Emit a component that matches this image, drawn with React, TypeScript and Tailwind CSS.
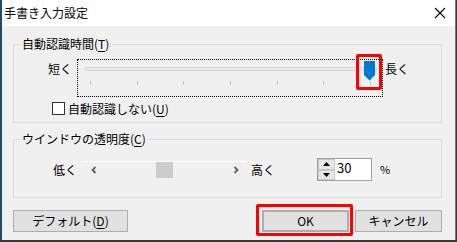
import React from 'react'

const font = { fontFamily: '"Noto Sans CJK JP", "Noto Sans", sans-serif' }

function Ul({ children }: { children: React.ReactNode }) {
  return <span className="underline underline-offset-2">{children}</span>
}

function Slider() {
  const ticks = [0, 1, 2, 3, 4, 5, 6]
  return (
    <div className="relative w-[306px] h-[38px] border border-dotted border-black">
      {/* track */}
      <div className="absolute left-[7px] top-[7px] w-[292px] h-[4px] bg-[#e7eaea] border border-[#d6d6d6]" />
      {/* ticks */}
      {ticks.map((i) => (
        <div
          key={i}
          className="absolute top-[21px] w-[1px] h-[4px] bg-[#c4c4c4]"
          style={{ left: 12 + i * 46.67 }}
        />
      ))}
      {/* thumb */}
      <svg className="absolute left-[286px] top-[1px]" width="11" height="20" viewBox="0 0 11 20">
        <polygon points="0,0 11,0 11,14 5.5,19.5 0,14" fill="#0078d7" />
      </svg>
      {/* annotation */}
      <div className="absolute left-[278px] top-[-6px] w-[26px] h-[36px] border-[3px] border-[#ff0000] rounded-[2px]" />
    </div>
  )
}

function ScrollBar() {
  return (
    <div className="relative w-[162px] h-[17px] border-t border-white flex items-center justify-between px-[6px]">
      <svg width="8" height="8" viewBox="0 0 8 8">
        <polyline points="5.5,1 2.5,4 5.5,7" fill="none" stroke="#606060" strokeWidth="1.8" />
      </svg>
      <div className="absolute left-[72px] top-0 w-[17px] h-[16px] bg-[#cdcdcd]" />
      <svg width="8" height="8" viewBox="0 0 8 8">
        <polyline points="2.5,1 5.5,4 2.5,7" fill="none" stroke="#606060" strokeWidth="1.8" />
      </svg>
    </div>
  )
}

function Spinner() {
  return (
    <div className="flex w-[55px] h-[23px] border border-[#a0a0a0] bg-white">
      <div className="flex flex-col w-[17px] h-full bg-[#f0f0f0]">
        <div className="flex-1 flex items-center justify-center border border-[#c8c8c8] bg-[#e6e6e6]">
          <svg width="7" height="4" viewBox="0 0 7 4"><polygon points="0,4 7,4 3.5,0" fill="#000" /></svg>
        </div>
        <div className="flex-1 flex items-center justify-center border border-[#c8c8c8] bg-[#e6e6e6]">
          <svg width="7" height="4" viewBox="0 0 7 4"><polygon points="0,0 7,0 3.5,4" fill="#000" /></svg>
        </div>
      </div>
      <div className="pl-[2px] text-[13px] leading-[18px]">30</div>
    </div>
  )
}

function Button({ children, className = '' }: { children: React.ReactNode; className?: string }) {
  return (
    <div
      className={`h-[22px] bg-[#e1e1e1] border border-[#adadad] flex items-center justify-center text-[12px] leading-none ${className}`}
    >
      {children}
    </div>
  )
}

export default function App() {
  return (
    <div className="w-[457px] h-[242px] overflow-hidden bg-[#3a3a3a] text-black" style={font}>
      <div className="w-[456px] h-[240px] flex flex-col border-l-[2px] border-[#1d4b72] border-r border-r-[#7a7a7a] bg-[#f0f0f0]">
        {/* title bar */}
        <div className="h-[26px] bg-white flex items-center justify-between pl-[2px] pr-[9px] shrink-0">
          <span className="text-[12px] leading-none">手書き入力設定</span>
          <svg width="12" height="12" viewBox="0 0 12 12">
            <path d="M1 1 L11 11 M11 1 L1 11" stroke="#000" strokeWidth="1.1" />
          </svg>
        </div>

        <div className="flex-1 flex flex-col pl-[11px] pr-[13px] pt-[10px]">
          {/* group 1 */}
          <fieldset className="h-[87px] border border-[#dcdcdc] px-0">
            <legend className="ml-[7px] px-[1px] text-[12px] leading-[16px]">
              自動認識時間(<Ul>T</Ul>)
            </legend>
            <div className="flex items-start pt-[7px] pl-[34px]">
              <span className="text-[12px] leading-none mt-[4px] mr-[5px]">短く</span>
              <Slider />
              <span className="text-[12px] leading-none mt-[4px] ml-[2px]">長く</span>
            </div>
            <div className="flex items-center pl-[38px] mt-[5px]">
              <div className="w-[13px] h-[13px] border border-[#333] bg-white mr-[3px]" />
              <span className="text-[12px] leading-none">
                自動認識しない(<Ul>U</Ul>)
              </span>
            </div>
          </fieldset>

          {/* group 2 */}
          <fieldset className="mt-[8px] h-[67px] border border-[#dcdcdc] px-0">
            <legend className="ml-[7px] px-[1px] text-[12px] leading-[16px]">
              ウインドウの透明度(<Ul>C</Ul>)
            </legend>
            <div className="flex items-center pl-[39px] pt-[11px]">
              <span className="text-[12px] leading-none mr-[7px]">低く</span>
              <ScrollBar />
              <span className="text-[12px] leading-none ml-[5px]">高く</span>
              <div className="ml-[42px]">
                <Spinner />
              </div>
              <span className="text-[11px] leading-none ml-[8px]">%</span>
            </div>
          </fieldset>

          {/* buttons */}
          <div className="flex items-center mt-[12px]">
            <Button className="w-[115px]">
              デフォルト(<Ul>D</Ul>)
            </Button>
            <div className="flex-1" />
            <div className="relative">
              <Button className="w-[87px] border-[2px] border-[#0078d7]">OK</Button>
              <div className="absolute left-[-6px] top-[-6px] w-[97px] h-[32px] border-[3px] border-[#ff0000] rounded-[2px]" />
            </div>
            <Button className="w-[87px] ml-[6px]">キャンセル</Button>
          </div>
        </div>
      </div>
    </div>
  )
}
